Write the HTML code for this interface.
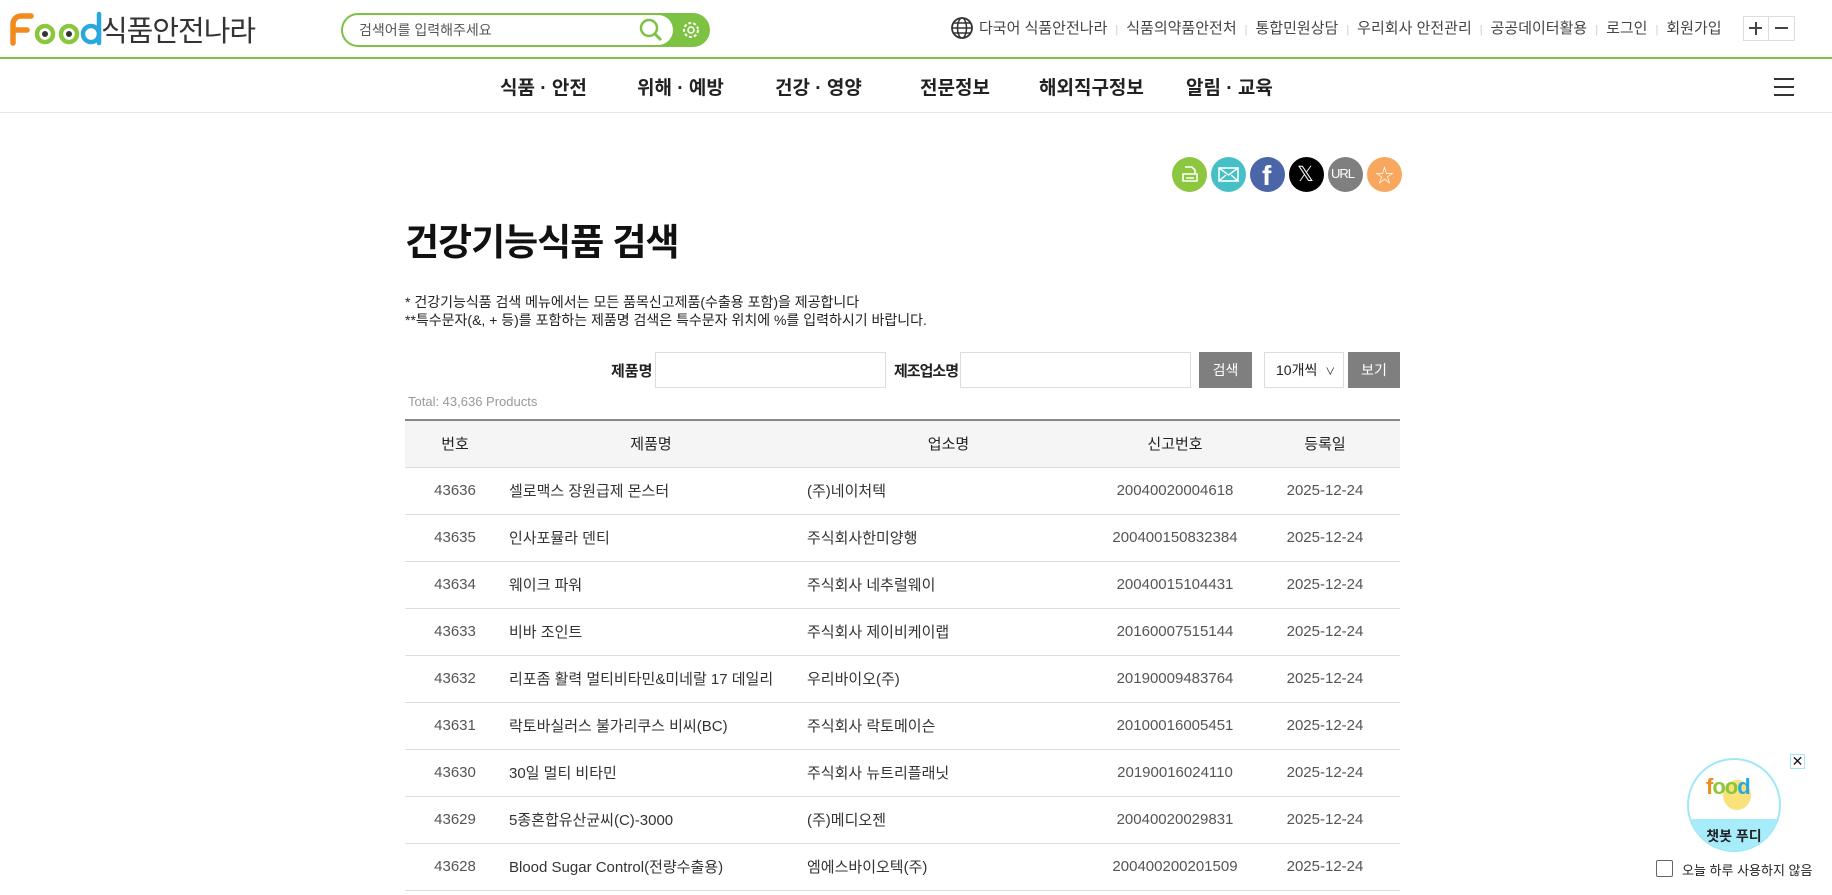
<!DOCTYPE html>
<html><head><meta charset="utf-8">
<style>
*{margin:0;padding:0;box-sizing:border-box}
body{width:1832px;height:895px;overflow:hidden;background:#fff;font-family:"Liberation Sans","Noto Sans CJK KR",sans-serif;color:#222;position:relative}
.abs{position:absolute}
.top a{color:#444;font-size:15px}
.sep{color:#ccc;margin:0 8px;font-size:11px}
.nav span{position:absolute;top:73px;font-size:19px;font-weight:bold;color:#222}
.sh{position:absolute;top:157px;width:35px;height:35px;border-radius:50%}
table{position:absolute;left:405px;top:419px;width:995px;border-collapse:collapse;table-layout:fixed;font-size:15px}
th{height:47px;background:#f5f5f5;font-weight:normal;color:#222;border-top:2px solid #888;border-bottom:1px solid #ddd}
td{height:47px;border-bottom:1px solid #ddd;color:#333}
td.c{text-align:center;color:#555}
</style></head><body>
<svg class="abs" style="left:8px;top:10px" width="100" height="36" viewBox="0 0 100 36">
<path d="M5 33V14a8 8 0 0 1 8-8h10M5 20h14" stroke="#f28a1d" stroke-width="5.5" fill="none" stroke-linecap="round"/>
<circle cx="37" cy="24" r="8" stroke="#8cc63f" stroke-width="4.5" fill="none"/><circle cx="37" cy="24" r="3" fill="#333"/>
<circle cx="61" cy="24" r="8" stroke="#8cc63f" stroke-width="4.5" fill="none"/><circle cx="61" cy="24" r="3" fill="#333"/>
<circle cx="83" cy="24" r="8" stroke="#29a8e0" stroke-width="4.5" fill="none"/><path d="M91 4v29" stroke="#29a8e0" stroke-width="4.5" stroke-linecap="round"/>
</svg>
<div class="abs" style="left:101px;top:8px;font-size:29px;color:#333;letter-spacing:-1px">식품안전나라</div>
<div class="abs" style="left:341px;top:13px;width:369px;height:34px;border:2px solid #7dc242;border-radius:17px;background:#7dc242"></div>
<div class="abs" style="left:343px;top:15px;width:330px;height:30px;border-radius:15px;background:#fff"></div>
<div class="abs" style="left:359px;top:20px;font-size:14px;color:#555">검색어를 입력해주세요</div>
<svg class="abs" style="left:638px;top:17px" width="26" height="26"><circle cx="11" cy="11" r="8" stroke="#7dc242" stroke-width="2.5" fill="none"/><path d="M17 17l6 6" stroke="#7dc242" stroke-width="3"/></svg>
<svg class="abs" style="left:680px;top:19px" width="22" height="22"><circle cx="11" cy="11" r="7" stroke="#fff" stroke-width="2" fill="none" stroke-dasharray="3 2"/><circle cx="11" cy="11" r="3" stroke="#fff" stroke-width="1.5" fill="none"/></svg>
<svg class="abs" style="left:950px;top:16px" width="24" height="24"><circle cx="12" cy="12" r="10" stroke="#333" stroke-width="1.8" fill="none"/><ellipse cx="12" cy="12" rx="4.5" ry="10" stroke="#333" stroke-width="1.5" fill="none"/><path d="M2 12h20M4 7h16M4 17h16" stroke="#333" stroke-width="1.4"/></svg>
<div class="abs top" style="left:979px;top:17px;white-space:nowrap"><a>다국어 식품안전나라</a><span class="sep">|</span><a>식품의약품안전처</a><span class="sep">|</span><a>통합민원상담</a><span class="sep">|</span><a>우리회사 안전관리</a><span class="sep">|</span><a>공공데이터활용</a><span class="sep">|</span><a>로그인</a><span class="sep">|</span><a>회원가입</a></div>
<div class="abs" style="left:1743px;top:16px;width:52px;height:25px;border:1px solid #ddd"></div>
<div class="abs" style="left:1768px;top:16px;width:1px;height:25px;background:#ddd"></div>
<div class="abs" style="left:1749px;top:27px;width:13px;height:2px;background:#444"></div>
<div class="abs" style="left:1755px;top:22px;width:2px;height:13px;background:#444"></div>
<div class="abs" style="left:1775px;top:27px;width:13px;height:2px;background:#444"></div>
<div class="abs" style="left:0;top:57px;width:1832px;height:2px;background:#7dc242"></div>
<div class="nav"><span style="left:500px">식품 · 안전</span><span style="left:637px">위해 · 예방</span><span style="left:775px">건강 · 영양</span><span style="left:920px">전문정보</span><span style="left:1039px">해외직구정보</span><span style="left:1186px">알림 · 교육</span></div>
<div class="abs" style="left:1774px;top:78px;width:20px;height:2px;background:#333;box-shadow:0 8px 0 #333,0 16px 0 #333"></div>
<div class="abs" style="left:0;top:112px;width:1832px;height:1px;background:#e5e5e5"></div>
<div class="sh" style="left:1172px;background:#8dc63f"></div>
<svg class="abs" style="left:1180px;top:165px" width="20" height="20"><path d="M5 2h7l3 3v4M3 9h14v7H3zM6 13h8" stroke="#fff" stroke-width="1.6" fill="none"/></svg>
<div class="sh" style="left:1211px;background:#45c0c6"></div>
<svg class="abs" style="left:1218px;top:167px" width="21" height="15"><rect x="1" y="1" width="19" height="13" stroke="#fff" stroke-width="1.6" fill="none"/><path d="M1 1l9.5 7L20 1M1 14l7-6M20 14l-7-6" stroke="#fff" stroke-width="1.4" fill="none"/></svg>
<div class="sh" style="left:1250px;background:#4a66a8"></div>
<div class="abs" style="left:1262px;top:160px;font-size:28px;font-weight:bold;color:#fff">f</div>
<div class="sh" style="left:1289px;background:#000"></div>
<div class="abs" style="left:1297px;top:162px;font-size:21px;color:#fff">𝕏</div>
<div class="sh" style="left:1328px;background:#7f7f7f"></div>
<div class="abs" style="left:1331px;top:166px;font-size:13px;color:#fff;letter-spacing:-1px">URL</div>
<div class="sh" style="left:1367px;background:#f7a85e"></div>
<div class="abs" style="left:1375px;top:161px;font-size:19px;color:#fff">☆</div>
<div class="abs" style="left:405px;top:212px;font-size:37px;font-weight:bold;color:#111;letter-spacing:-1px">건강기능식품 검색</div>
<div class="abs" style="left:405px;top:293px;font-size:14px;line-height:18px;color:#222">* 건강기능식품 검색 메뉴에서는 모든 품목신고제품(수출용 포함)을 제공합니다<br>**특수문자(&amp;, + 등)를 포함하는 제품명 검색은 특수문자 위치에 %를 입력하시기 바랍니다.</div>
<div class="abs" style="left:611px;top:360px;font-size:15px;font-weight:bold">제품명</div>
<div class="abs" style="left:655px;top:352px;width:231px;height:36px;border:1px solid #ddd"></div>
<div class="abs" style="left:894px;top:360px;font-size:15px;font-weight:bold;letter-spacing:-1px">제조업소명</div>
<div class="abs" style="left:960px;top:352px;width:231px;height:36px;border:1px solid #ddd"></div>
<div class="abs" style="left:1199px;top:352px;width:53px;height:36px;background:#7f7f7f;color:#fff;font-size:14px;text-align:center;line-height:36px">검색</div>
<div class="abs" style="left:1264px;top:352px;width:80px;height:36px;border:1px solid #ddd;font-size:14px;line-height:34px;padding-left:11px">10개씩 <span style="font-size:10px;margin-left:4px">∨</span></div>
<div class="abs" style="left:1348px;top:352px;width:52px;height:36px;background:#7f7f7f;color:#fff;font-size:14px;text-align:center;line-height:36px">보기</div>
<div class="abs" style="left:408px;top:394px;font-size:13px;color:#999">Total: 43,636 Products</div>
<table>
<colgroup><col style="width:100px"><col style="width:292px"><col style="width:303px"><col style="width:150px"><col style="width:150px"></colgroup>
<tr><th>번호</th><th>제품명</th><th>업소명</th><th>신고번호</th><th>등록일</th></tr>
<tr><td class="c">43636</td><td style="padding-left:4px">셀로맥스 장원급제 몬스터</td><td style="padding-left:10px">(주)네이처텍</td><td class="c">20040020004618</td><td class="c">2025-12-24</td></tr>
<tr><td class="c">43635</td><td style="padding-left:4px">인사포뮬라 덴티</td><td style="padding-left:10px">주식회사한미양행</td><td class="c">200400150832384</td><td class="c">2025-12-24</td></tr>
<tr><td class="c">43634</td><td style="padding-left:4px">웨이크 파워</td><td style="padding-left:10px">주식회사 네추럴웨이</td><td class="c">20040015104431</td><td class="c">2025-12-24</td></tr>
<tr><td class="c">43633</td><td style="padding-left:4px">비바 조인트</td><td style="padding-left:10px">주식회사 제이비케이랩</td><td class="c">20160007515144</td><td class="c">2025-12-24</td></tr>
<tr><td class="c">43632</td><td style="padding-left:4px">리포좀 활력 멀티비타민&amp;미네랄 17 데일리</td><td style="padding-left:10px">우리바이오(주)</td><td class="c">20190009483764</td><td class="c">2025-12-24</td></tr>
<tr><td class="c">43631</td><td style="padding-left:4px">락토바실러스 불가리쿠스 비씨(BC)</td><td style="padding-left:10px">주식회사 락토메이슨</td><td class="c">20100016005451</td><td class="c">2025-12-24</td></tr>
<tr><td class="c">43630</td><td style="padding-left:4px">30일 멀티 비타민</td><td style="padding-left:10px">주식회사 뉴트리플래닛</td><td class="c">20190016024110</td><td class="c">2025-12-24</td></tr>
<tr><td class="c">43629</td><td style="padding-left:4px">5종혼합유산균씨(C)-3000</td><td style="padding-left:10px">(주)메디오젠</td><td class="c">20040020029831</td><td class="c">2025-12-24</td></tr>
<tr><td class="c">43628</td><td style="padding-left:4px">Blood Sugar Control(전량수출용)</td><td style="padding-left:10px">엠에스바이오텍(주)</td><td class="c">200400200201509</td><td class="c">2025-12-24</td></tr>
</table>
<div class="abs" style="left:1687px;top:758px;width:94px;height:94px;border-radius:50%;border:2px solid #9ee8f7;background:#fff;overflow:hidden">
<div class="abs" style="left:0;top:59px;width:94px;height:40px;background:#a6ecfa"></div>
<div class="abs" style="left:0;top:66px;width:90px;text-align:center;font-size:14px;font-weight:bold;color:#222">챗봇 푸디</div>
<div class="abs" style="left:34px;top:20px;width:28px;height:30px;border-radius:50%;background:#f9e27a"></div>
<div class="abs" style="left:17px;top:14px;font-size:22px;font-weight:bold;letter-spacing:-1px"><span style="color:#f28a1d">f</span><span style="color:#8cc63f">oo</span><span style="color:#29a8e0">d</span></div>
</div>
<div class="abs" style="left:1790px;top:754px;width:15px;height:15px;border:1px solid #9ee8f7;font-size:14px;line-height:13px;text-align:center;color:#111">✕</div>
<div class="abs" style="left:1656px;top:860px;width:17px;height:17px;border:1px solid #666;border-radius:2px"></div>
<div class="abs" style="left:1682px;top:860px;font-size:13px;color:#222">오늘 하루 사용하지 않음</div>
</body></html>
